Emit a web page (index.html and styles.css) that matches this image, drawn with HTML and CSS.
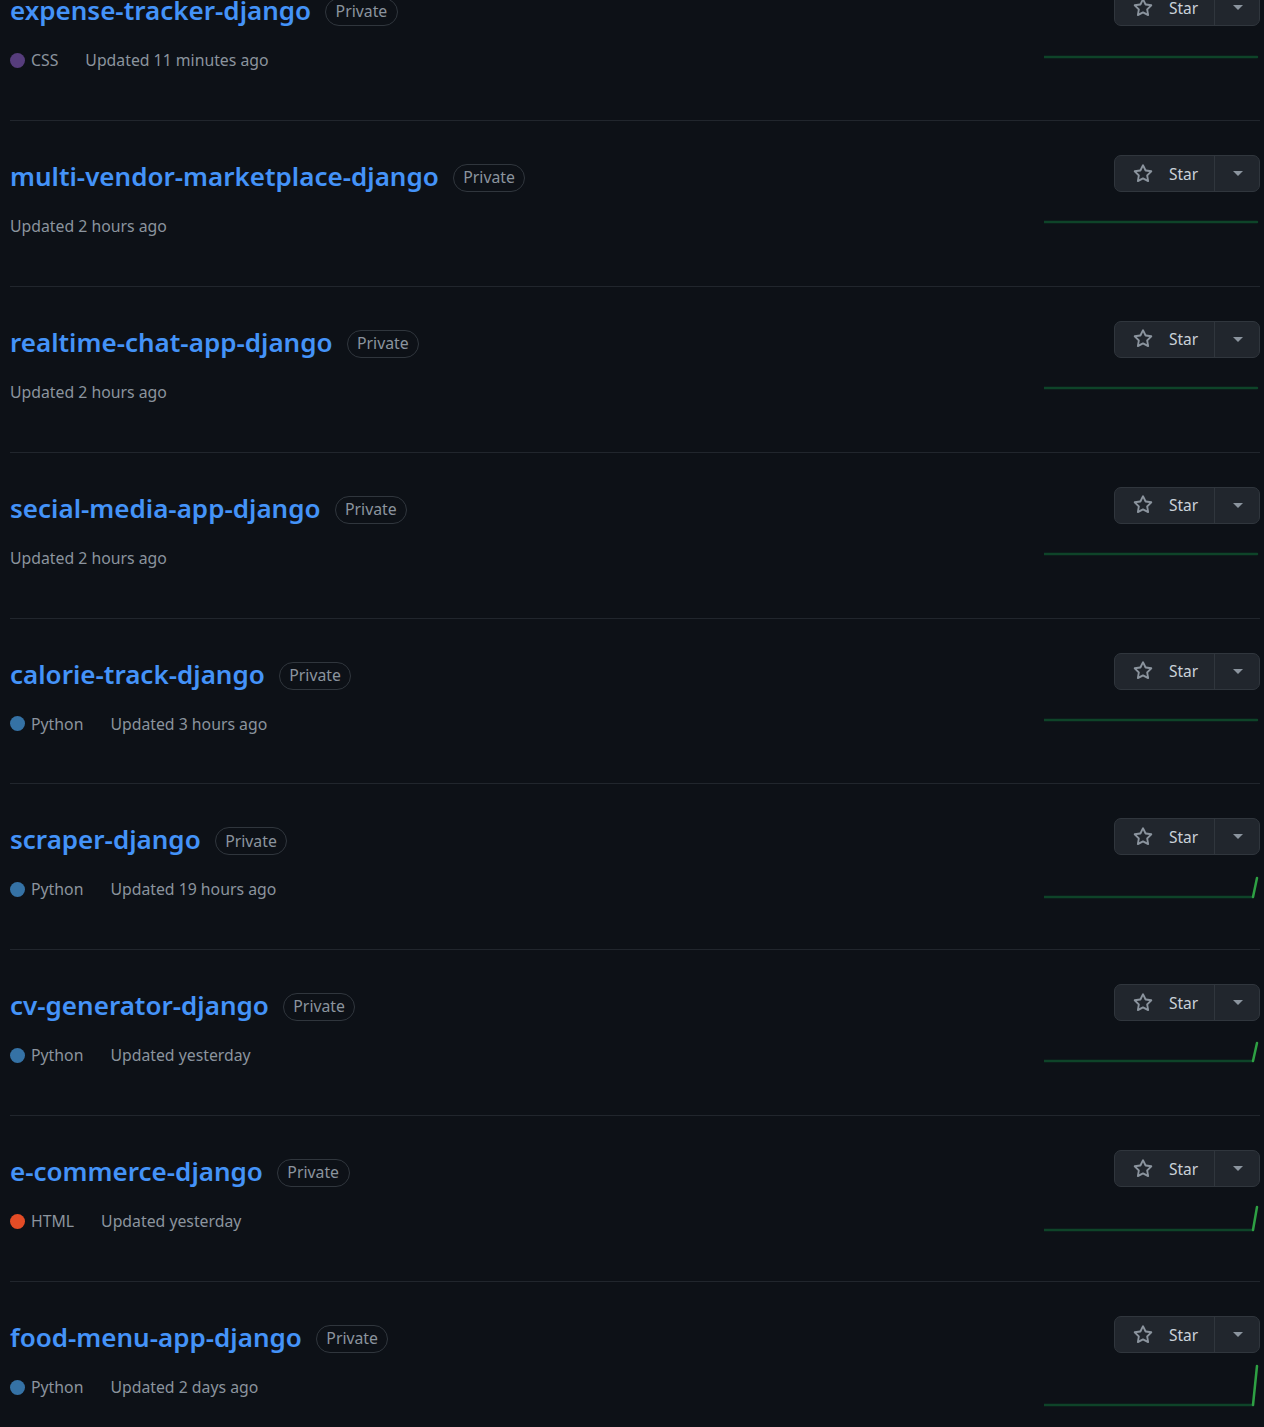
FILE: index.html
```html
<!DOCTYPE html>
<html lang="en">
<head>
<meta charset="utf-8">
<title>Repositories</title>
<link rel="stylesheet" href="styles.css">
</head>
<body>
<ul class="repo-list">
  <li class="repo">
    <div class="repo-main">
      <h3 class="repo-title"><a class="repo-name" href="#">expense-tracker-django</a><span class="badge">Private</span></h3>
      <div class="repo-meta"><span class="lang"><span class="dot dot-css"></span>CSS</span><span>Updated 11 minutes ago</span></div>
    </div>
    <div class="repo-side">
      <div class="star-btn"><span class="star-main"><svg class="star-icon" viewBox="0 0 16 16" width="20" height="20"><path fill="currentColor" d="M8 .25a.75.75 0 0 1 .673.418l1.882 3.815 4.21.612a.75.75 0 0 1 .416 1.279l-3.046 2.97.719 4.192a.751.751 0 0 1-1.088.791L8 12.347l-3.766 1.98a.75.75 0 0 1-1.088-.79l.72-4.194L.818 6.374a.75.75 0 0 1 .416-1.28l4.21-.611L7.327.668A.75.75 0 0 1 8 .25Zm0 2.445L6.615 5.5a.75.75 0 0 1-.564.41l-3.097.45 2.24 2.184a.75.75 0 0 1 .216.664l-.528 3.084 2.769-1.456a.75.75 0 0 1 .698 0l2.770 1.456-.53-3.084a.75.75 0 0 1 .216-.664l2.24-2.183-3.096-.45a.75.75 0 0 1-.564-.41L8 2.694Z"/></svg>Star</span><span class="star-drop"><span class="caret"></span></span></div>
      <svg class="spark" width="216" height="50" viewBox="0 0 216 50"><polyline points="0,24 213,24" class="flat"/></svg>
    </div>
  </li>
  <li class="repo">
    <div class="repo-main">
      <h3 class="repo-title"><a class="repo-name" href="#">multi-vendor-marketplace-django</a><span class="badge">Private</span></h3>
      <div class="repo-meta"><span>Updated 2 hours ago</span></div>
    </div>
    <div class="repo-side">
      <div class="star-btn"><span class="star-main"><svg class="star-icon" viewBox="0 0 16 16" width="20" height="20"><path fill="currentColor" d="M8 .25a.75.75 0 0 1 .673.418l1.882 3.815 4.21.612a.75.75 0 0 1 .416 1.279l-3.046 2.97.719 4.192a.751.751 0 0 1-1.088.791L8 12.347l-3.766 1.98a.75.75 0 0 1-1.088-.79l.72-4.194L.818 6.374a.75.75 0 0 1 .416-1.28l4.21-.611L7.327.668A.75.75 0 0 1 8 .25Zm0 2.445L6.615 5.5a.75.75 0 0 1-.564.41l-3.097.45 2.24 2.184a.75.75 0 0 1 .216.664l-.528 3.084 2.769-1.456a.75.75 0 0 1 .698 0l2.770 1.456-.53-3.084a.75.75 0 0 1 .216-.664l2.24-2.183-3.096-.45a.75.75 0 0 1-.564-.41L8 2.694Z"/></svg>Star</span><span class="star-drop"><span class="caret"></span></span></div>
      <svg class="spark" width="216" height="50" viewBox="0 0 216 50"><polyline points="0,23 213,23" class="flat"/></svg>
    </div>
  </li>
  <li class="repo">
    <div class="repo-main">
      <h3 class="repo-title"><a class="repo-name" href="#">realtime-chat-app-django</a><span class="badge">Private</span></h3>
      <div class="repo-meta"><span>Updated 2 hours ago</span></div>
    </div>
    <div class="repo-side">
      <div class="star-btn"><span class="star-main"><svg class="star-icon" viewBox="0 0 16 16" width="20" height="20"><path fill="currentColor" d="M8 .25a.75.75 0 0 1 .673.418l1.882 3.815 4.21.612a.75.75 0 0 1 .416 1.279l-3.046 2.97.719 4.192a.751.751 0 0 1-1.088.791L8 12.347l-3.766 1.98a.75.75 0 0 1-1.088-.79l.72-4.194L.818 6.374a.75.75 0 0 1 .416-1.28l4.21-.611L7.327.668A.75.75 0 0 1 8 .25Zm0 2.445L6.615 5.5a.75.75 0 0 1-.564.41l-3.097.45 2.24 2.184a.75.75 0 0 1 .216.664l-.528 3.084 2.769-1.456a.75.75 0 0 1 .698 0l2.770 1.456-.53-3.084a.75.75 0 0 1 .216-.664l2.24-2.183-3.096-.45a.75.75 0 0 1-.564-.41L8 2.694Z"/></svg>Star</span><span class="star-drop"><span class="caret"></span></span></div>
      <svg class="spark" width="216" height="50" viewBox="0 0 216 50"><polyline points="0,23 213,23" class="flat"/></svg>
    </div>
  </li>
  <li class="repo">
    <div class="repo-main">
      <h3 class="repo-title"><a class="repo-name" href="#">secial-media-app-django</a><span class="badge">Private</span></h3>
      <div class="repo-meta"><span>Updated 2 hours ago</span></div>
    </div>
    <div class="repo-side">
      <div class="star-btn"><span class="star-main"><svg class="star-icon" viewBox="0 0 16 16" width="20" height="20"><path fill="currentColor" d="M8 .25a.75.75 0 0 1 .673.418l1.882 3.815 4.21.612a.75.75 0 0 1 .416 1.279l-3.046 2.97.719 4.192a.751.751 0 0 1-1.088.791L8 12.347l-3.766 1.98a.75.75 0 0 1-1.088-.79l.72-4.194L.818 6.374a.75.75 0 0 1 .416-1.28l4.21-.611L7.327.668A.75.75 0 0 1 8 .25Zm0 2.445L6.615 5.5a.75.75 0 0 1-.564.41l-3.097.45 2.24 2.184a.75.75 0 0 1 .216.664l-.528 3.084 2.769-1.456a.75.75 0 0 1 .698 0l2.770 1.456-.53-3.084a.75.75 0 0 1 .216-.664l2.24-2.183-3.096-.45a.75.75 0 0 1-.564-.41L8 2.694Z"/></svg>Star</span><span class="star-drop"><span class="caret"></span></span></div>
      <svg class="spark" width="216" height="50" viewBox="0 0 216 50"><polyline points="0,23 213,23" class="flat"/></svg>
    </div>
  </li>
  <li class="repo">
    <div class="repo-main">
      <h3 class="repo-title"><a class="repo-name" href="#">calorie-track-django</a><span class="badge">Private</span></h3>
      <div class="repo-meta"><span class="lang"><span class="dot dot-py"></span>Python</span><span>Updated 3 hours ago</span></div>
    </div>
    <div class="repo-side">
      <div class="star-btn"><span class="star-main"><svg class="star-icon" viewBox="0 0 16 16" width="20" height="20"><path fill="currentColor" d="M8 .25a.75.75 0 0 1 .673.418l1.882 3.815 4.21.612a.75.75 0 0 1 .416 1.279l-3.046 2.97.719 4.192a.751.751 0 0 1-1.088.791L8 12.347l-3.766 1.98a.75.75 0 0 1-1.088-.79l.72-4.194L.818 6.374a.75.75 0 0 1 .416-1.28l4.21-.611L7.327.668A.75.75 0 0 1 8 .25Zm0 2.445L6.615 5.5a.75.75 0 0 1-.564.41l-3.097.45 2.24 2.184a.75.75 0 0 1 .216.664l-.528 3.084 2.769-1.456a.75.75 0 0 1 .698 0l2.770 1.456-.53-3.084a.75.75 0 0 1 .216-.664l2.24-2.183-3.096-.45a.75.75 0 0 1-.564-.41L8 2.694Z"/></svg>Star</span><span class="star-drop"><span class="caret"></span></span></div>
      <svg class="spark" width="216" height="50" viewBox="0 0 216 50"><polyline points="0,23 213,23" class="flat"/></svg>
    </div>
  </li>
  <li class="repo">
    <div class="repo-main">
      <h3 class="repo-title"><a class="repo-name" href="#">scraper-django</a><span class="badge">Private</span></h3>
      <div class="repo-meta"><span class="lang"><span class="dot dot-py"></span>Python</span><span>Updated 19 hours ago</span></div>
    </div>
    <div class="repo-side">
      <div class="star-btn"><span class="star-main"><svg class="star-icon" viewBox="0 0 16 16" width="20" height="20"><path fill="currentColor" d="M8 .25a.75.75 0 0 1 .673.418l1.882 3.815 4.21.612a.75.75 0 0 1 .416 1.279l-3.046 2.97.719 4.192a.751.751 0 0 1-1.088.791L8 12.347l-3.766 1.98a.75.75 0 0 1-1.088-.79l.72-4.194L.818 6.374a.75.75 0 0 1 .416-1.28l4.21-.611L7.327.668A.75.75 0 0 1 8 .25Zm0 2.445L6.615 5.5a.75.75 0 0 1-.564.41l-3.097.45 2.24 2.184a.75.75 0 0 1 .216.664l-.528 3.084 2.769-1.456a.75.75 0 0 1 .698 0l2.770 1.456-.53-3.084a.75.75 0 0 1 .216-.664l2.24-2.183-3.096-.45a.75.75 0 0 1-.564-.41L8 2.694Z"/></svg>Star</span><span class="star-drop"><span class="caret"></span></span></div>
      <svg class="spark" width="216" height="50" viewBox="0 0 216 50"><polyline points="0,35 209,35" class="flat"/><polyline points="209,35 213,16" class="rise"/></svg>
    </div>
  </li>
  <li class="repo">
    <div class="repo-main">
      <h3 class="repo-title"><a class="repo-name" href="#">cv-generator-django</a><span class="badge">Private</span></h3>
      <div class="repo-meta"><span class="lang"><span class="dot dot-py"></span>Python</span><span>Updated yesterday</span></div>
    </div>
    <div class="repo-side">
      <div class="star-btn"><span class="star-main"><svg class="star-icon" viewBox="0 0 16 16" width="20" height="20"><path fill="currentColor" d="M8 .25a.75.75 0 0 1 .673.418l1.882 3.815 4.21.612a.75.75 0 0 1 .416 1.279l-3.046 2.97.719 4.192a.751.751 0 0 1-1.088.791L8 12.347l-3.766 1.98a.75.75 0 0 1-1.088-.79l.72-4.194L.818 6.374a.75.75 0 0 1 .416-1.28l4.21-.611L7.327.668A.75.75 0 0 1 8 .25Zm0 2.445L6.615 5.5a.75.75 0 0 1-.564.41l-3.097.45 2.24 2.184a.75.75 0 0 1 .216.664l-.528 3.084 2.769-1.456a.75.75 0 0 1 .698 0l2.770 1.456-.53-3.084a.75.75 0 0 1 .216-.664l2.24-2.183-3.096-.45a.75.75 0 0 1-.564-.41L8 2.694Z"/></svg>Star</span><span class="star-drop"><span class="caret"></span></span></div>
      <svg class="spark" width="216" height="50" viewBox="0 0 216 50"><polyline points="0,33 209,33" class="flat"/><polyline points="209,33 213,15" class="rise"/></svg>
    </div>
  </li>
  <li class="repo">
    <div class="repo-main">
      <h3 class="repo-title"><a class="repo-name" href="#">e-commerce-django</a><span class="badge">Private</span></h3>
      <div class="repo-meta"><span class="lang"><span class="dot dot-html"></span>HTML</span><span>Updated yesterday</span></div>
    </div>
    <div class="repo-side">
      <div class="star-btn"><span class="star-main"><svg class="star-icon" viewBox="0 0 16 16" width="20" height="20"><path fill="currentColor" d="M8 .25a.75.75 0 0 1 .673.418l1.882 3.815 4.21.612a.75.75 0 0 1 .416 1.279l-3.046 2.97.719 4.192a.751.751 0 0 1-1.088.791L8 12.347l-3.766 1.98a.75.75 0 0 1-1.088-.79l.72-4.194L.818 6.374a.75.75 0 0 1 .416-1.28l4.21-.611L7.327.668A.75.75 0 0 1 8 .25Zm0 2.445L6.615 5.5a.75.75 0 0 1-.564.41l-3.097.45 2.24 2.184a.75.75 0 0 1 .216.664l-.528 3.084 2.769-1.456a.75.75 0 0 1 .698 0l2.770 1.456-.53-3.084a.75.75 0 0 1 .216-.664l2.24-2.183-3.096-.45a.75.75 0 0 1-.564-.41L8 2.694Z"/></svg>Star</span><span class="star-drop"><span class="caret"></span></span></div>
      <svg class="spark" width="216" height="50" viewBox="0 0 216 50"><polyline points="0,36 209,36" class="flat"/><polyline points="209,36 213,13" class="rise"/></svg>
    </div>
  </li>
  <li class="repo">
    <div class="repo-main">
      <h3 class="repo-title"><a class="repo-name" href="#">food-menu-app-django</a><span class="badge">Private</span></h3>
      <div class="repo-meta"><span class="lang"><span class="dot dot-py"></span>Python</span><span>Updated 2 days ago</span></div>
    </div>
    <div class="repo-side">
      <div class="star-btn"><span class="star-main"><svg class="star-icon" viewBox="0 0 16 16" width="20" height="20"><path fill="currentColor" d="M8 .25a.75.75 0 0 1 .673.418l1.882 3.815 4.21.612a.75.75 0 0 1 .416 1.279l-3.046 2.97.719 4.192a.751.751 0 0 1-1.088.791L8 12.347l-3.766 1.98a.75.75 0 0 1-1.088-.79l.72-4.194L.818 6.374a.75.75 0 0 1 .416-1.28l4.21-.611L7.327.668A.75.75 0 0 1 8 .25Zm0 2.445L6.615 5.5a.75.75 0 0 1-.564.41l-3.097.45 2.24 2.184a.75.75 0 0 1 .216.664l-.528 3.084 2.769-1.456a.75.75 0 0 1 .698 0l2.770 1.456-.53-3.084a.75.75 0 0 1 .216-.664l2.24-2.183-3.096-.45a.75.75 0 0 1-.564-.41L8 2.694Z"/></svg>Star</span><span class="star-drop"><span class="caret"></span></span></div>
      <svg class="spark" width="216" height="50" viewBox="0 0 216 50"><polyline points="0,45 209,45" class="flat"/><polyline points="209,45 213,6" class="rise"/></svg>
    </div>
  </li>
</ul>
</body>
</html>
```

FILE: styles.css
```css
html, body {
  margin: 0;
  padding: 0;
  background: #0d1117;
  overflow: hidden;
}
body {
  font-family: "Noto Sans", "Open Sans", sans-serif;
  color: #8b949e;
}
.repo-list {
  list-style: none;
  margin: -44.86px 4px 0 10px;
  padding: 0;
}
.repo {
  display: flex;
  justify-content: space-between;
  height: 164.86px;
  border-bottom: 1px solid #21262d;
  box-sizing: content-box;
}
.repo-main {
  padding-top: 40px;
}
.repo-title {
  margin: 0;
  display: flex;
  align-items: center;
  height: 30px;
  font-size: 26px;
  font-weight: 600;
  line-height: 30px;
}
.repo-name {
  color: #4493f8;
  text-decoration: none;
}
.badge {
  display: inline-flex;
  align-items: center;
  height: 26px;
  margin-top: 4px;
  margin-left: 14px;
  padding: 0 9.5px;
  border: 1px solid #30363d;
  border-radius: 999px;
  font-size: 15.8px;
  font-weight: 400;
  color: #8b949e;
  line-height: 1;
}
.repo-meta {
  margin-top: 24px;
  display: flex;
  align-items: center;
  height: 22px;
  font-size: 15.8px;
  line-height: 22px;
}
.lang {
  display: inline-flex;
  align-items: center;
  margin-right: 27px;
}
.dot {
  width: 15px;
  height: 15px;
  border-radius: 50%;
  margin-right: 6px;
  display: inline-block;
}
.dot-css { background: #563d7c; }
.dot-py { background: #3572a5; }
.dot-html { background: #e34c26; }
.repo-side {
  display: flex;
  flex-direction: column;
  align-items: flex-end;
  padding-top: 34px;
  width: 216px;
}
.star-btn {
  display: flex;
  height: 37px;
  box-sizing: border-box;
  border: 1px solid #30363d;
  border-radius: 7px;
  background: #21262d;
  color: #c9d1d9;
  font-size: 15.5px;
}
.star-main {
  display: flex;
  align-items: center;
  width: 100px;
  padding-left: 18px;
  box-sizing: border-box;
  border-right: 1px solid #30363d;
}
.star-icon {
  color: #8b949e;
  margin-right: 16px;
}
.star-drop {
  width: 44px;
  display: flex;
  align-items: center;
  justify-content: center;
}
.caret {
  width: 0;
  height: 0;
  border-left: 5px solid transparent;
  border-right: 5px solid transparent;
  border-top: 5px solid #8b949e;
  margin-left: 1px;
}
.spark {
  margin-top: 7px;
  display: block;
}
.spark polyline {
  fill: none;
  stroke-width: 2.5;
  stroke-linecap: round;
  stroke-linejoin: round;
}
.spark .flat { stroke: #0e4429; }
.spark .rise { stroke: #2ea043; }
```
